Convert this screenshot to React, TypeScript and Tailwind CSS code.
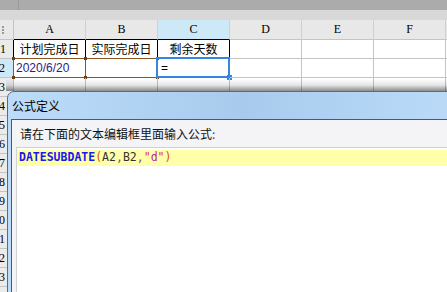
import React from "react";

const COLS = ["A", "B", "C", "D", "E", "F"];
const ROW_GRID = "grid grid-cols-[14px_72px_72px_72px_72px_72px_72px_1fr]";
const HDR = "font-[family-name:'Liberation_Serif',serif]";
const CJK = "font-[family-name:'Noto_Sans_CJK_SC',sans-serif]";
const SANS = "font-[family-name:'Liberation_Sans',sans-serif]";
const CODE = "font-[family-name:'DejaVu_Sans_Mono',monospace]";

function RowHeader({ n, active }: { n: number; active?: boolean }) {
  return (
    <div
      className={`flex justify-end overflow-hidden whitespace-nowrap border-r border-b border-[#c4c4c4] pr-[8px] ${HDR} text-[12px] leading-[18px] ${
        active ? "bg-[#cde9f7]" : "bg-[#ebebeb]"
      }`}
    >
      <span>{n}</span>
    </div>
  );
}

function Cell({ children, className = "" }: { children?: React.ReactNode; className?: string }) {
  return (
    <div className={`relative border-r border-b border-[#c4c4c4] text-[12px] leading-[18px] ${className}`}>
      {children}
    </div>
  );
}

function RefBox() {
  return (
    <div className="pointer-events-none absolute inset-[-1px] border border-[#8a5524]">
      <span className="absolute -left-[2px] -top-[2px] h-[3px] w-[3px] bg-[#6e3f14]" />
      <span className="absolute -right-[2px] -top-[2px] h-[3px] w-[3px] bg-[#6e3f14]" />
      <span className="absolute -left-[2px] -bottom-[2px] h-[3px] w-[3px] bg-[#6e3f14]" />
      <span className="absolute -right-[2px] -bottom-[2px] h-[3px] w-[3px] bg-[#6e3f14]" />
    </div>
  );
}

export default function App() {
  return (
    <div className="relative h-[292px] w-[447px] overflow-hidden bg-white text-black">
      {/* ribbon edge */}
      <div className="flex h-[10px] bg-[#ababab]">
        <div className="w-[19px] border-r border-[#9a9a9a]" />
      </div>
      <div className="h-[10px] bg-[#d8d8d8]" />

      {/* column headers */}
      <div className={`${ROW_GRID} h-[20px]`}>
        <div className="flex flex-col items-center justify-center gap-[1px] border-r border-b border-[#c4c4c4] bg-[#e8e8e8] pr-[8px]">
          <span className="h-[2px] w-[2px] bg-[#9a9a9a]" />
          <span className="h-[2px] w-[2px] bg-[#9a9a9a]" />
          <span className="h-[2px] w-[2px] bg-[#9a9a9a]" />
        </div>
        {COLS.map((c, i) => (
          <div
            key={c}
            className={`border-r border-b border-r-[#d0d0d0] text-center ${HDR} text-[12px] leading-[19px] ${
              i < 3 ? "border-b-black" : "border-b-[#c4c4c4]"
            } ${i === 2 ? "bg-[#cde9f7]" : "bg-[#e8e8e8]"}`}
          >
            {c}
          </div>
        ))}
        <div className="border-b border-[#c4c4c4] bg-[#e8e8e8]" />
      </div>

      {/* row 1 */}
      <div className={`${ROW_GRID} h-[19px]`}>
        <div className={`overflow-hidden border-r border-b border-r-black border-b-[#c4c4c4] bg-[#ebebeb] pr-[8px] text-right ${HDR} text-[12px] leading-[18px]`}>
          1
        </div>
        <Cell className={`border-r-black border-b-black text-center ${CJK}`}>计划完成日</Cell>
        <Cell className={`overflow-hidden whitespace-nowrap border-r-black border-b-black text-center ${CJK}`}>
          实际完成日
        </Cell>
        <Cell className={`border-r-black border-b-black text-center ${CJK}`}>剩余天数</Cell>
        <Cell />
        <Cell />
        <Cell />
        <div className="border-b border-[#c4c4c4]" />
      </div>

      {/* row 2 */}
      <div className={`${ROW_GRID} h-[19px]`}>
        <RowHeader n={2} active />
        <Cell className={`pl-[2px] ${SANS} text-[#2b1e86]`}>
          2020/6/20
          <RefBox />
        </Cell>
        <Cell>
          <RefBox />
        </Cell>
        <Cell className={`pl-[3px] ${SANS}`}>
          =
          <div className="pointer-events-none absolute -left-[2px] -top-[2px] -right-[1px] -bottom-[1px] border-2 border-[#3585e3]">
            <span className="absolute -right-[4px] -bottom-[4px] h-[5px] w-[5px] bg-[#3585e3]" />
          </div>
        </Cell>
        <Cell />
        <Cell />
        <Cell />
        <div className="border-b border-[#c4c4c4]" />
      </div>

      {[3, 4, 5, 6, 7, 8, 9, 10, 11, 12, 13, 14].map((n) => (
        <div key={n} className={`${ROW_GRID} h-[19px]`}>
          <RowHeader n={n} />
          <Cell />
          <Cell />
          <Cell />
          <Cell />
          <Cell />
          <Cell />
          <div className="border-b border-[#c4c4c4]" />
        </div>
      ))}

      {/* window shadow over sheet */}
      <div className="pointer-events-none absolute left-[6px] right-0 top-[79px] h-[12px] bg-gradient-to-b from-transparent via-black/10 to-black/45" />

      {/* 公式定义 dialog */}
      <div className="absolute left-[7px] top-[91px] flex h-[230px] w-[470px] flex-col rounded-tl-[7px] border border-[#5c6b7c] bg-gradient-to-r from-[#bcdcf9] via-[#a8cbed] to-[#bcdcf9]">
        <div className={`flex h-[27px] items-center pl-[4px] text-[12px] ${CJK}`}>公式定义</div>
        <div className="ml-[3px] flex flex-1 flex-col border-l border-t border-[#4b5a6b] bg-[#f4f4f6]">
          <div className={`pl-[8px] pt-[7px] text-[12px] leading-[14px] text-[#111] ${CJK}`}>
            请在下面的文本编辑框里面输入公式<span className="text-[#6a2a8a]">:</span>
          </div>
          <div className="ml-[4px] mt-[6px] flex-1 border-l border-t border-[#d0d0d5] bg-white pt-[2px]">
            <div className={`flex h-[16px] items-center whitespace-pre bg-[#ffffaa] pl-[2px] ${CODE} text-[11.5px]`}>
              <span className="font-bold text-[#1818f0]">DATESUBDATE</span>
              <span className="text-[#e0501e]">(</span>
              <span className="text-[#333]">A2</span>
              <span className="text-[#666]">,</span>
              <span className="text-[#333]">B2</span>
              <span className="text-[#666]">,</span>
              <span className="text-[#e0306a]">"</span>
              <span className="text-[#c020b0]">d</span>
              <span className="text-[#e0306a]">"</span>
              <span className="text-[#e0501e]">)</span>
            </div>
          </div>
        </div>
      </div>
    </div>
  );
}
